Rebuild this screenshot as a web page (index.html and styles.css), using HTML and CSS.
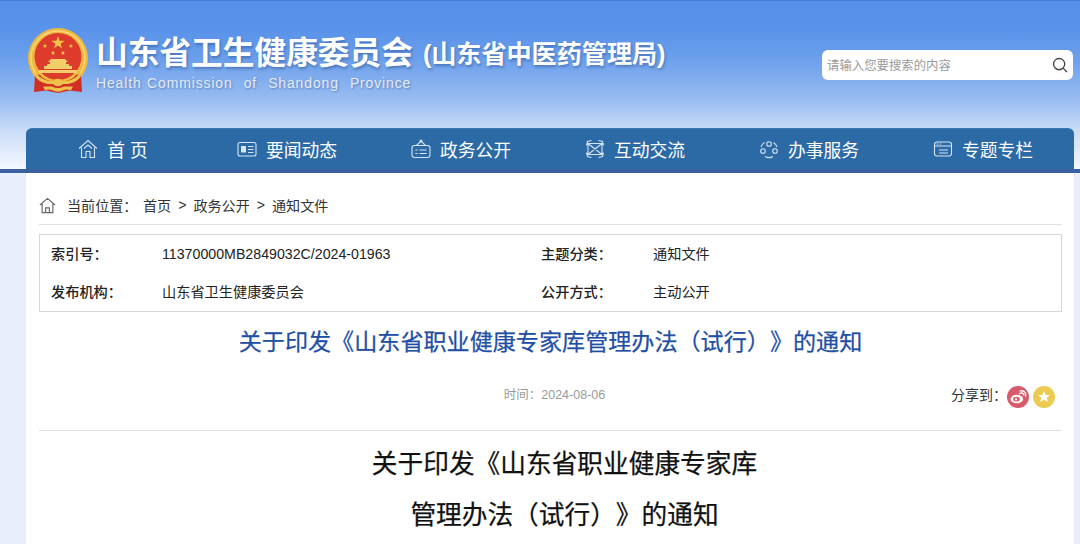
FILE: index.html
```html
<!DOCTYPE html>
<html lang="zh-CN">
<head>
<meta charset="utf-8">
<title>关于印发《山东省职业健康专家库管理办法（试行）》的通知</title>
<link rel="stylesheet" href="styles.css">
</head>
<body>
<header class="header">
  <div class="brand-row">
    <div class="brand">
      <svg class="emblem" viewBox="0 0 60 66" aria-hidden="true">
        <circle cx="30" cy="30" r="30" fill="#eeb93f"/>
        <circle cx="30" cy="30" r="27" fill="none" stroke="#f6d675" stroke-width="1.500"/>
        <circle cx="30" cy="28.500" r="23.500" fill="#dd3c2c"/>
        <path d="M30 8l1.600 4.700h5l-4 3 1.500 4.800-4.100-2.900-4.100 2.900 1.500-4.800-4-3h5z" fill="#f2c44a"/>
        <path d="M17 15.500l.6 1.700h1.800l-1.500 1.100.6 1.800-1.500-1.100-1.500 1.100.6-1.800-1.500-1.100h1.800zM43 15.500l.6 1.700h1.800l-1.500 1.100.6 1.800-1.500-1.100-1.500 1.100.6-1.800-1.500-1.100h1.800zM25 22.500l.6 1.700h1.800l-1.500 1.100.6 1.800-1.500-1.100-1.500 1.100.6-1.800-1.500-1.100h1.800zM35 22.500l.6 1.700h1.800l-1.500 1.100.6 1.800-1.500-1.100-1.500 1.100.6-1.800-1.500-1.100h1.800z" fill="#f2c44a"/>
        <path d="M23 31h14l3 3h-2v2h3v2h3v3H16v-3h3v-2h3v-2h-2zM11 42h38v3H11z" fill="#f3cf6c"/>
        <path d="M7 46l5 1c3 4 8 6 13 6 2-2 8-2 10 0 5 0 10-2 13-6l5-1 1 18-12-1.500L30 65l-12-2.500L6 64z" fill="#cf2f27"/>
        <path d="M8 44c4 8 12 9 17 9 2-3 8-3 10 0 5 0 13-1 17-9l1.500 3c-4 8-13 9.500-18.500 9-3 3-7 3-10 0-5.500.500-14.500-1-18.500-9z" fill="#efc14c"/>
        <path d="M15 58.500h9c2 1 4 1.500 6 1.500s4-.500 6-1.500h9l-2 3.500c-4-.800-6-.800-8 .500-3 1.500-7 1.500-10 0-2-1.300-4-1.300-8-.500z" fill="#efc14c"/>
      </svg>
      <div class="brand-text">
        <div class="brand-title"><span class="brand-main">山东省卫生健康委员会</span><span class="brand-sub">(山东省中医药管理局)</span></div>
        <div class="brand-en">Health Commission&nbsp; of&nbsp; Shandong&nbsp; Province</div>
      </div>
    </div>
    <div class="search">
      <span class="search-hint">请输入您要搜索的内容</span>
      <svg class="search-icon" viewBox="0 0 18 18" aria-hidden="true"><circle cx="8" cy="8" r="6.300"/><path d="M12.800 12.800L16.500 16.500"/></svg>
    </div>
  </div>
  <nav class="nav">
    <a class="nav-item"><svg class="nav-icon" viewBox="0 0 20 20"><path d="M1 9.500L10 1.500l9 8M3.500 8.500V18.500h4.500v-6h4v6h4.500V8.500M6 9.500l4-3.500 4 3.500"/></svg><span>首 页</span></a>
    <a class="nav-item"><svg class="nav-icon" viewBox="0 0 20 20"><rect x="1" y="3.500" width="18" height="13.500" rx="2"/><rect x="4" y="7" width="5" height="6.500" fill="#dbe7f6" stroke="none"/><path d="M11 7.500h5.500M11 10.500h5.500M11 13.500h5.500"/></svg><span>要闻动态</span></a>
    <a class="nav-item"><svg class="nav-icon" viewBox="0 0 20 20"><rect x="1" y="6.500" width="18" height="12" rx="2.500"/><path d="M5.500 6.500L10 2l4.500 4.500M4.500 11h2M8.500 11h7M4.500 14.500h2M8.500 14.500h7"/><circle cx="10" cy="2" r="1"/></svg><span>政务公开</span></a>
    <a class="nav-item"><svg class="nav-icon" viewBox="0 0 20 20"><path d="M3 4.500h14v11H3zM3 4.500l14 11M17 4.500l-14 11M1.500 6.500l1-4 4-1M18.500 6.500l-1-4-4-1M1.500 13.500l1 4 4 1M18.500 13.500l-1 4-4 1"/></svg><span>互动交流</span></a>
    <a class="nav-item"><svg class="nav-icon" viewBox="0 0 20 20"><circle cx="10" cy="5" r="2.300"/><circle cx="4" cy="12" r="2.300"/><circle cx="16" cy="12" r="2.300"/><path d="M5.500 3.500A8 8 0 0 0 2 8M14.500 3.500A8 8 0 0 1 18 8M6 17.500a8 8 0 0 0 8 0"/></svg><span>办事服务</span></a>
    <a class="nav-item"><svg class="nav-icon" viewBox="0 0 20 20"><rect x="1.500" y="3" width="17" height="14" rx="2.500"/><path d="M1.500 7h17M6 11h9M6 14h9M3.800 5h1.500M6.800 5h1.500"/></svg><span>专题专栏</span></a>
  </nav>
</header>
<main class="page">
  <div class="crumbs">
    <svg class="crumbs-icon" viewBox="0 0 18 18" aria-hidden="true"><path d="M1 8.500L9 1.500l8 7M3.300 7v9.500h11.400V7M7 16.500v-5h4v5"/></svg>
    <span class="crumbs-label">当前位置：</span>
    <span>首页</span><span class="crumbs-sep">&gt;</span><span>政务公开</span><span class="crumbs-sep">&gt;</span><span>通知文件</span>
  </div>
  <div class="info">
    <b>索引号：</b><span>11370000MB2849032C/2024-01963</span><b>主题分类：</b><span>通知文件</span>
    <b>发布机构：</b><span>山东省卫生健康委员会</span><b>公开方式：</b><span>主动公开</span>
  </div>
  <h1 class="title">关于印发《山东省职业健康专家库管理办法（试行）》的通知</h1>
  <div class="meta">
    <span class="meta-time">时间：2024-08-06</span>
    <div class="share">
      <span class="share-label">分享到：</span>
      <span class="share-btn share-weibo"><svg viewBox="0 0 22 22" aria-hidden="true"><ellipse cx="9.800" cy="13" rx="6.300" ry="4.300" fill="#fff"/><ellipse cx="9.500" cy="13.200" rx="3.300" ry="2.400" fill="#d95a6b"/><circle cx="9" cy="13.400" r="1.100" fill="#fff"/><path d="M12.500 7.500c2-1 4-.5 4.500 1.500M13 5c3.500-1 6.500 1.500 5.800 5" fill="none" stroke="#fff" stroke-width="1.300" stroke-linecap="round"/></svg></span>
      <span class="share-btn share-star"><svg viewBox="0 0 22 22" aria-hidden="true"><path d="M11 5l1.800 4h4.200l-3.300 2.800 1.200 4.300-3.900-2.400-3.900 2.400 1.200-4.300L5 9h4.200z" fill="#fff"/></svg></span>
    </div>
  </div>
  <h2 class="heading">关于印发《山东省职业健康专家库<br>管理办法（试行）》的通知</h2>
</main>
</body>
</html>
```

FILE: styles.css
```css
* { box-sizing: border-box; }
html, body { margin: 0; height: 544px; overflow: hidden; }
body {
  background: #e8eefc;
  font-family: "Liberation Sans", "Noto Sans CJK SC", sans-serif;
  color: #222;
  text-spacing-trim: space-all;
}
.header {
  height: 173px;
  display: flex;
  flex-direction: column;
  border-top: 1px solid #4679d6;
  border-bottom: 4px solid #3b609f;
  background: linear-gradient(180deg, #568fe9 0, #5a93ea 30px, #6ea1ec 60px, #9abdf1 100px, #c8dbf8 128px, #f6f9ff 169px);
}
.brand-row {
  height: 127px;
  display: flex;
  justify-content: space-between;
  padding: 27px 7px 0 28px;
}
.brand { display: flex; gap: 8px; align-items: flex-start; }
.emblem { width: 60px; height: 66px; flex: none; }
.brand-text { color: #fff; }
.brand-title {
  height: 46px;
  margin-top: 2px;
  display: flex;
  align-items: center;
  font-weight: 700;
  text-shadow: 1px 2px 3px rgba(20, 50, 110, .4);
  white-space: nowrap;
}
.brand-main { font-size: 31.700px; line-height: 46px; }
.brand-sub { font-size: 25.100px; line-height: 46px; margin-left: 10px; margin-top: 1px; }
.brand-en {
  margin-top: -2px;
  font-size: 14px;
  line-height: 18px;
  letter-spacing: .85px;
  word-spacing: .8px;
  color: #e4ebf6;
  text-shadow: 1px 1px 2px rgba(20, 50, 110, .4);
  white-space: nowrap;
}
.search {
  width: 251px;
  height: 30px;
  margin-top: 22px;
  padding: 0 5px;
  display: flex;
  align-items: center;
  justify-content: space-between;
  background: #fff;
  border-radius: 6px;
}
.search-hint { font-size: 12.400px; color: #9a9a9a; }
.search-icon {
  width: 16px;
  height: 16px;
  fill: none;
  stroke: #444;
  stroke-width: 1.500;
  stroke-linecap: round;
}
.nav {
  width: 1048px;
  height: 41px;
  margin-left: 26px;
  display: grid;
  grid-template-columns: repeat(6, 174px);
  background: #2c6aa5;
  border-radius: 6px 6px 0 0;
  border-top: 1px solid #3a78b4;
  color: #fff;
}
.nav-item {
  display: flex;
  align-items: center;
  justify-content: center;
  gap: 9px;
  font-size: 17.800px;
  white-space: nowrap;
}
.nav-icon {
  width: 20px;
  height: 20px;
  flex: none;
  fill: none;
  stroke: #d5e3f5;
  stroke-width: 1.100;
}
.page {
  width: 1048px;
  height: 371px;
  margin-left: 26px;
  padding: 0 12px 0 13px;
  background: #fff;
  overflow: hidden;
}
.crumbs {
  height: 52px;
  padding-top: 13px;
  display: flex;
  align-items: center;
  border-bottom: 1px solid #e2e2e2;
  font-size: 14.100px;
  color: #333;
  white-space: nowrap;
}
.crumbs-icon {
  width: 17px;
  height: 17px;
  margin-right: 11px;
  fill: none;
  stroke: #666;
  stroke-width: 1.200;
}
.crumbs-label { width: 76px; }
.crumbs-sep { margin: 0 7px; }
.info {
  height: 78px;
  margin-top: 9px;
  padding: 0 11px;
  display: grid;
  grid-template-columns: 111px 379px 112px 1fr;
  grid-auto-rows: 38px;
  align-items: center;
  border: 1px solid #d6d6d6;
  font-size: 14.200px;
  line-height: 20px;
  color: #222;
}
.info b { font-weight: 500; }
.title {
  margin: 13px 0 0;
  font-size: 23.100px;
  line-height: 34px;
  font-weight: 400;
  -webkit-text-stroke: .25px #1f4fa5;
  text-align: center;
  color: #1f4fa5;
  white-space: nowrap;
}
.meta {
  height: 72px;
  padding-bottom: 3px;
  display: flex;
  align-items: center;
  justify-content: center;
  position: relative;
  border-bottom: 1px solid #dedede;
}
.meta-time { font-size: 12.500px; color: #999; margin-left: 8px; }
.share {
  position: absolute;
  right: 7px;
  top: 25px;
  display: flex;
  align-items: center;
  font-size: 14px;
  color: #333;
}
.share-label { width: 56px; margin-bottom: 5px; }
.share-btn {
  width: 22px;
  height: 22px;
  margin-left: 4px;
  border-radius: 50%;
  display: block;
}
.share-btn svg { display: block; width: 22px; height: 22px; }
.share-weibo { background: #d95a6b; margin-left: 0; }
.share-star { background: #eccb52; }
.heading {
  margin: 8px 0 0;
  padding-left: 28px;
  font-size: 25.700px;
  line-height: 50.500px;
  font-weight: 400;
  -webkit-text-stroke: .25px #111;
  text-align: center;
  color: #111;
}
```
